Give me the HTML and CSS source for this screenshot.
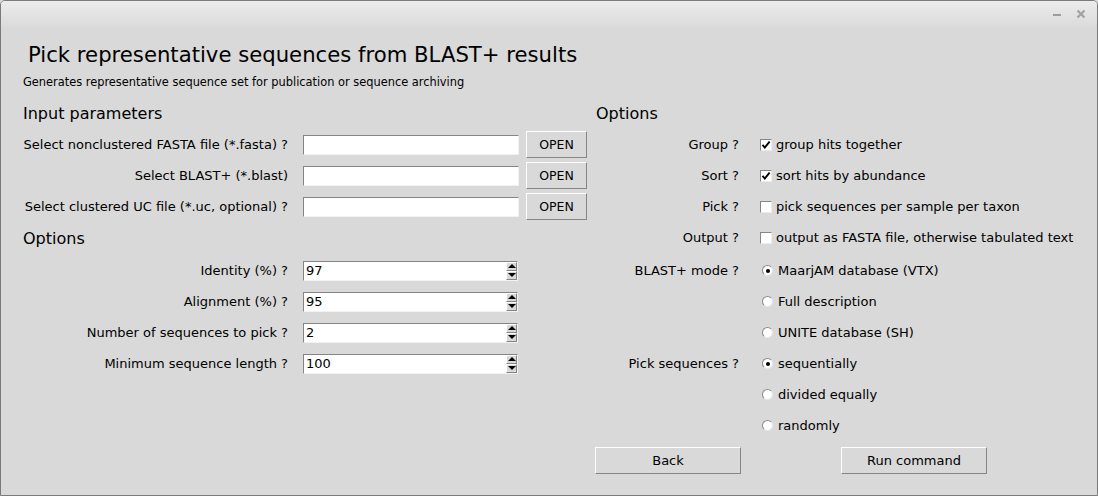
FILE: index.html
```html
<!DOCTYPE html>
<html>
<head>
<meta charset="utf-8">
<link rel="stylesheet" href="styles.css">
</head>
<body>
<div class="window">
  <div class="titlebar">
    <svg class="tb-icon" width="10" height="10" viewBox="0 0 10 10"><rect x="1" y="5" width="8" height="2" fill="#9c9c9c"/></svg>
    <svg class="tb-icon" width="10" height="10" viewBox="0 0 10 10"><path d="M1.5 1.5 L8.5 8.5 M8.5 1.5 L1.5 8.5" stroke="#a2a2a2" stroke-width="2.2" fill="none"/></svg>
  </div>
  <div class="content">
    <h1 class="title">Pick representative sequences from BLAST+ results</h1>
    <p class="subtitle">Generates representative sequence set for publication or sequence archiving</p>
    <div class="columns">
      <div class="left">
        <h2 class="heading">Input parameters</h2>
        <div class="form-grid">
          <span class="lbl">Select nonclustered FASTA file (*.fasta) ?</span><span class="entry"></span><button class="btn open">OPEN</button>
          <span class="lbl">Select BLAST+ (*.blast)</span><span class="entry"></span><button class="btn open">OPEN</button>
          <span class="lbl">Select clustered UC file (*.uc, optional) ?</span><span class="entry"></span><button class="btn open">OPEN</button>
        </div>
        <h2 class="heading options-heading">Options</h2>
        <div class="form-grid">
          <span class="lbl">Identity (%) ?</span><span class="entry spin"><span class="val">97</span><span class="arrows"><span class="arrow up"></span><span class="arrow down"></span></span></span><span></span>
          <span class="lbl">Alignment (%) ?</span><span class="entry spin"><span class="val">95</span><span class="arrows"><span class="arrow up"></span><span class="arrow down"></span></span></span><span></span>
          <span class="lbl">Number of sequences to pick ?</span><span class="entry spin"><span class="val">2</span><span class="arrows"><span class="arrow up"></span><span class="arrow down"></span></span></span><span></span>
          <span class="lbl">Minimum sequence length ?</span><span class="entry spin"><span class="val">100</span><span class="arrows"><span class="arrow up"></span><span class="arrow down"></span></span></span><span></span>
        </div>
      </div>
      <div class="right">
        <h2 class="heading right-heading">Options</h2>
        <div class="opt-grid">
          <span class="olbl">Group ?</span>
          <span class="check"><span class="box"><svg width="10" height="10" viewBox="0 0 10 10"><polyline points="1.5,4.8 3.8,7.6 8.6,1.6" stroke="#000" stroke-width="1.9" fill="none"/></svg></span>group hits together</span>
          <span class="olbl">Sort ?</span>
          <span class="check"><span class="box"><svg width="10" height="10" viewBox="0 0 10 10"><polyline points="1.5,4.8 3.8,7.6 8.6,1.6" stroke="#000" stroke-width="1.9" fill="none"/></svg></span>sort hits by abundance</span>
          <span class="olbl">Pick ?</span>
          <span class="check"><span class="box"></span>pick sequences per sample per taxon</span>
          <span class="olbl">Output ?</span>
          <span class="check"><span class="box"></span>output as FASTA file, otherwise tabulated text</span>
        </div>
        <div class="opt-grid radios">
          <span class="olbl">BLAST+ mode ?</span>
          <span class="check radio"><span class="dot on"></span>MaarjAM database (VTX)</span>
          <span></span>
          <span class="check radio"><span class="dot"></span>Full description</span>
          <span></span>
          <span class="check radio"><span class="dot"></span>UNITE database (SH)</span>
          <span class="olbl">Pick sequences ?</span>
          <span class="check radio"><span class="dot on"></span>sequentially</span>
          <span></span>
          <span class="check radio"><span class="dot"></span>divided equally</span>
          <span></span>
          <span class="check radio"><span class="dot"></span>randomly</span>
        </div>
        <div class="actions">
          <button class="btn act">Back</button>
          <button class="btn act">Run command</button>
        </div>
      </div>
    </div>
  </div>
</div>
</body>
</html>
```
FILE: styles.css
```css
* { box-sizing: border-box; }
html, body { margin: 0; padding: 0; background: #d9d9d9; }
body { font-family: "DejaVu Sans", "Noto Sans", sans-serif; color: #000; }

.window {
  width: 1098px;
  height: 496px;
  border: 1px solid #7b7b7b;
  border-radius: 5px 5px 0 0;
  background: #d9d9d9;
  overflow: hidden;
  display: flex;
  flex-direction: column;
}

.titlebar {
  height: 27px;
  flex: none;
  background: linear-gradient(#ececec, #dadada);
  display: flex;
  justify-content: flex-end;
  align-items: flex-start;
  gap: 14px;
  padding: 8px 11px 0 0;
}
.tb-icon { display: block; }

.content { flex: 1; }

.title {
  margin: 12px 0 0 27px;
  font-size: 21.2px;
  line-height: 30px;
  font-weight: normal;
}
.subtitle {
  margin: 5px 0 0 22px;
  font-size: 11.4px;
  line-height: 14px;
}

.columns { display: flex; margin-top: 9px; }
.left { width: 594px; flex: none; padding-left: 22px; }
.right { flex: 1; }

.heading {
  margin: 0;
  font-size: 16px;
  font-weight: normal;
  line-height: 31px;
}
.options-heading { line-height: 33px; }
.right-heading { padding-left: 1px; }

.form-grid {
  display: grid;
  grid-template-columns: 280px 216px 68px;
  grid-auto-rows: 31px;
  align-items: center;
}
.lbl {
  text-align: right;
  padding-right: 15px;
  font-size: 13px;
  white-space: nowrap;
}

.entry {
  display: block;
  height: 20px;
  background: #fff;
  border-top: 1px solid #858585;
  border-left: 1px solid #858585;
  border-right: 1px solid #f2f2f2;
  border-bottom: 1px solid #f2f2f2;
}
.spin {
  width: 215px;
  display: flex;
  align-items: center;
  justify-content: space-between;
  padding-left: 2px;
  font-size: 13px;
}
.arrows {
  display: flex;
  flex-direction: column;
  width: 11px;
  height: 18px;
}
.arrow {
  flex: 1;
  background: #d9d9d9;
  border-top: 1px solid #fff;
  border-left: 1px solid #fff;
  border-right: 1px solid #858585;
  border-bottom: 1px solid #858585;
  display: flex;
  align-items: center;
  justify-content: center;
}
.up::before, .down::before {
  content: "";
  width: 0;
  height: 0;
  border-left: 4px solid transparent;
  border-right: 4px solid transparent;
}
.up::before { border-bottom: 4px solid #000; }
.down::before { border-top: 4px solid #000; }

.btn {
  font-family: "DejaVu Sans", "Noto Sans", sans-serif;
  color: #000;
  background: #d9d9d9;
  border-top: 1px solid #fff;
  border-left: 1px solid #fff;
  border-right: 1px solid #858585;
  border-bottom: 1px solid #858585;
  height: 27px;
  padding: 0;
  margin: 0;
}
.open { width: 61px; margin-left: 7px; font-size: 12.5px; }

.opt-grid {
  display: grid;
  grid-template-columns: 146px 346px;
  grid-auto-rows: 31px;
  align-items: center;
}
.radios { margin-top: 2px; }
.olbl {
  text-align: right;
  padding-right: 2px;
  font-size: 13px;
  white-space: nowrap;
}
.check {
  display: flex;
  align-items: center;
  gap: 4px;
  padding-left: 19px;
  font-size: 13px;
  white-space: nowrap;
}
.box {
  width: 12px;
  height: 12px;
  flex: none;
  background: #fff;
  border-top: 1px solid #858585;
  border-left: 1px solid #858585;
  border-right: 1px solid #ececec;
  border-bottom: 1px solid #ececec;
  display: flex;
  align-items: center;
  justify-content: center;
}
.box svg { display: block; }
.radio { padding-left: 21px; gap: 5px; }
.dot {
  width: 11px;
  height: 11px;
  flex: none;
  border-radius: 50%;
  background: #fff;
  border: 1px solid;
  border-color: #8a8a8a #e6e6e6 #e6e6e6 #8a8a8a;
  display: flex;
  align-items: center;
  justify-content: center;
}
.dot.on::before {
  content: "";
  width: 4px;
  height: 4px;
  border-radius: 50%;
  background: #000;
}

.actions {
  display: grid;
  grid-template-columns: 146px 346px;
  margin-top: 6px;
}
.act { width: 146px; justify-self: center; font-size: 13px; }
```
